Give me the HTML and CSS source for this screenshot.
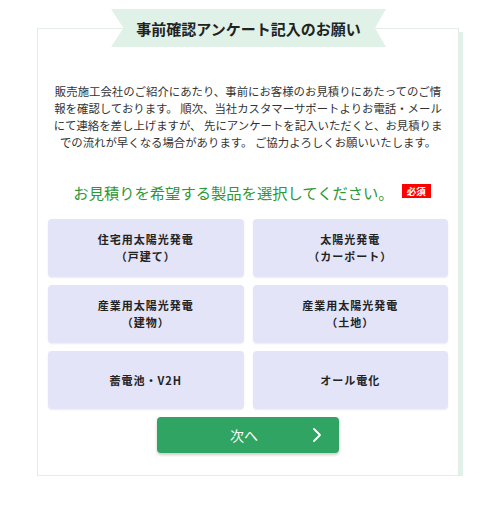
FILE: index.html
```html
<!DOCTYPE html>
<html lang="ja">
<head>
  <meta charset="UTF-8">
  <meta name="viewport" content="width=device-width, initial-scale=1.0">
  <title>事前確認アンケート記入のお願い</title>
  <link rel="stylesheet" href="styles.css">
</head>
<body>
  <!-- Title ribbon sits over the top border of the card -->
  <div class="ribbon">事前確認アンケート記入のお願い</div>

  <div class="card">
    <p class="intro">販売施工会社のご紹介にあたり、事前にお客様のお見積りにあたってのご情<br>報を確認しております。 順次、当社カスタマーサポートよりお電話・メール<br>にて連絡を差し上げますが、 先にアンケートを記入いただくと、お見積りま<br>での流れが早くなる場合があります。 ご協力よろしくお願いいたします。</p>

    <div class="question">
      <span class="question-text">お見積りを希望する製品を選択してください。</span>
      <span class="required">必須</span>
    </div>

    <div class="choices">
      <button class="choice">住宅用太陽光発電<br>（戸建て）</button>
      <button class="choice">太陽光発電<br>（カーポート）</button>
      <button class="choice">産業用太陽光発電<br>（建物）</button>
      <button class="choice">産業用太陽光発電<br>（土地）</button>
      <button class="choice">蓄電池・V2H</button>
      <button class="choice">オール電化</button>
    </div>

    <button class="next-button">
      <span>次へ</span>
      <svg class="chevron" width="10" height="16" viewBox="0 0 10 16">
        <polyline points="2,2 8,8 2,14" fill="none" stroke="#fff" stroke-width="1.8" stroke-linecap="round" stroke-linejoin="round"/>
      </svg>
    </button>
  </div>
</body>
</html>
```

FILE: styles.css
```css
body {
  margin: 0;
  padding: 0;
  background-color: #fff;
  font-family: "Noto Sans CJK JP", "Noto Sans", sans-serif;
  color: #333;
}

/* Ribbon title */
.ribbon {
  position: relative;
  z-index: 1;
  width: 275px;
  height: 38px;
  margin: 9px 0 -19px 111px;
  background-color: #e0f2e7;
  clip-path: polygon(0 0, 100% 0, 96% 50%, 100% 100%, 0 100%, 4.5% 50%);
  display: flex;
  justify-content: center;
  align-items: center;
  font-size: 15px;
  font-weight: bold;
  color: #222;
}

.card {
  width: 422px;
  margin-left: 37px;
  padding: 54px 10px 22px;
  box-sizing: border-box;
  background-color: #fff;
  border: 1px solid #e4ece7;
  box-shadow: 4px 4px 0 #e0f1e7;
}

.intro {
  margin: 0;
  font-size: 11.4px;
  line-height: 17px;
  text-align: center;
  white-space: nowrap;
  color: #333;
}

.question {
  display: flex;
  justify-content: center;
  align-items: center;
  gap: 8px;
  margin: 30px 0 16px;
  padding-left: 8px;
  height: 22px;
}

.question-text {
  font-size: 15.3px;
  color: #2f9733;
}

.required {
  background-color: #f00;
  color: #fff;
  font-size: 9.5px;
  font-weight: bold;
  padding: 0 5px;
  line-height: 14px;
  margin-top: -3px;
}

/* Product choices */
.choices {
  display: grid;
  grid-template-columns: 1fr 1fr;
  gap: 8px 9px;
}

.choice {
  height: 58px;
  border: none;
  border-radius: 4px;
  background-color: #e4e4f8;
  box-shadow: 0 1px 2px rgba(0, 0, 0, 0.08);
  font-family: "Noto Sans CJK JP", sans-serif;
  font-size: 11px;
  font-weight: bold;
  letter-spacing: 1px;
  line-height: 17px;
  color: #222;
  cursor: pointer;
}

.next-button {
  position: relative;
  display: flex;
  justify-content: center;
  align-items: center;
  width: 182px;
  height: 36px;
  margin: 8px auto 0;
  border: none;
  border-radius: 4px;
  background-color: #2fa463;
  box-shadow: 0 2px 3px rgba(0, 0, 0, 0.2);
  color: #fff;
  font-family: "Noto Sans CJK JP", sans-serif;
  font-size: 14px;
  cursor: pointer;
}

.next-button span {
  margin-left: -8px;
}

.chevron {
  position: absolute;
  right: 17px;
  top: 10px;
}
```
